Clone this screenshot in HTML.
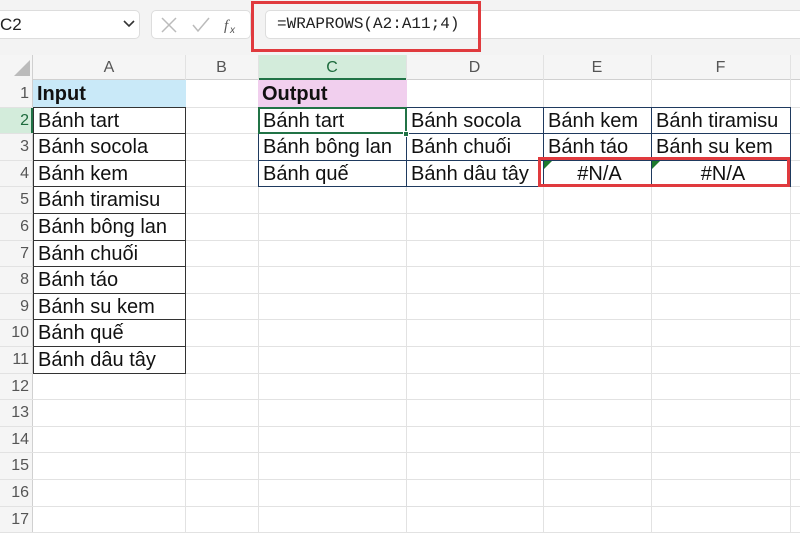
<!DOCTYPE html>
<html><head><meta charset="utf-8"><style>
*{margin:0;padding:0;box-sizing:border-box}
body{width:800px;height:533px;overflow:hidden;background:#fff;font-family:"Liberation Sans",Arial,sans-serif;position:relative}
.a{position:absolute}
.c{position:absolute;font-size:20px;color:#111;white-space:nowrap;line-height:28px;padding-left:4px;overflow:hidden}
.h{position:absolute;color:#555;font-size:16px;text-align:center}
</style></head><body>
<div class="a" style="left:0;top:0;width:800px;height:55px;background:#f3f3f3"></div>
<div class="a" style="left:-5px;top:10px;width:145px;height:29px;background:#fff;border:1px solid #ddd;border-radius:5px"></div>
<div class="a" style="left:0;top:15px;font-size:17px;color:#222">C2</div>
<svg class="a" style="left:123px;top:20px" width="12" height="8"><path d="M1 1 L6 6 L11 1" stroke="#333" stroke-width="1.6" fill="none"/></svg>
<div class="a" style="left:151px;top:10px;width:100px;height:29px;background:#fff;border:1px solid #ddd;border-radius:5px"></div>
<svg class="a" style="left:160px;top:16px" width="80" height="18"><path d="M2 2 L16 16 M16 2 L2 16" stroke="#bbb" stroke-width="1.5"/><path d="M33 9 L38 15 L49 2" stroke="#bbb" stroke-width="1.5" fill="none"/><text x="64" y="14" font-size="15" font-style="italic" font-family="Liberation Serif" fill="#555">f</text><text x="70" y="17" font-size="10" font-style="italic" fill="#555">x</text></svg>
<div class="a" style="left:265px;top:10px;width:540px;height:29px;background:#fff;border:1px solid #ddd;border-radius:5px"></div>
<div class="a" style="left:277px;top:15px;font-family:'Liberation Mono',monospace;font-size:16px;color:#222">=WRAPROWS(A2:A11;4)</div>
<div class="a" style="left:251px;top:1px;width:230px;height:51px;border:3px solid #e03a3e"></div>
<div id="g"></div>
<script>
var cols=[33,185,258,406,543,651,790,800],names=["A","B","C","D","E","F",""];
var top0=80,rh=26.6,H="";
H+='<div class="a" style="left:0;top:55px;width:800px;height:25px;background:#f5f5f5;border-bottom:1px solid #d0d0d0"></div>';
H+='<div class="a" style="left:0;top:55px;width:33px;height:478px;background:#f5f5f5;border-right:1px solid #d0d0d0"></div>';
H+='<svg class="a" style="left:14px;top:60px" width="16" height="16"><path d="M16 0 L16 16 L0 16Z" fill="#bbb"/></svg>';
H+='<div class="a" style="left:258px;top:55px;width:148px;height:25px;background:#d3ecdb;border-bottom:2px solid #217346"></div>';
for(var i=0;i<7;i++){H+='<div class="h" style="left:'+cols[i]+'px;top:59px;width:'+(cols[i+1]-cols[i])+'px;'+(i==2?'color:#1e6b3d':'')+'">'+names[i]+'</div>';
H+='<div class="a" style="left:'+cols[i+1]+'px;top:55px;width:1px;height:478px;background:#e2e2e2"></div>';}
H+='<div class="a" style="left:0;top:'+(top0+rh)+'px;width:33px;height:'+rh+'px;background:#d3ecdb;border-right:2px solid #217346"></div>';
for(var r=1;r<=17;r++){var y=top0+(r-1)*rh;
H+='<div class="h" style="left:0;top:'+(y+5)+'px;width:29px;text-align:right;'+(r==2?'color:#1e6b3d':'')+'">'+r+'</div>';
H+='<div class="a" style="left:0;top:'+(y+rh)+'px;width:800px;height:1px;background:#e2e2e2"></div>';}
function cell(c,r,t,st){var y=top0+(r-1)*rh;H+='<div class="c" style="left:'+cols[c]+'px;top:'+y+'px;width:'+(cols[c+1]-cols[c]+1)+'px;height:'+(rh+1)+'px;'+(st||'')+'">'+t+'</div>';}
var inp=["Bánh tart","Bánh socola","Bánh kem","Bánh tiramisu","Bánh bông lan","Bánh chuối","Bánh táo","Bánh su kem","Bánh quế","Bánh dâu tây"];
cell(0,1,"Input","background:#c9e9f8;font-weight:bold");
cell(2,1,"Output","background:#f1cfee;font-weight:bold");
for(var k=0;k<10;k++)cell(0,k+2,inp[k],"border:1px solid #333;line-height:26px");
for(var k=0;k<12;k++){var rr=Math.floor(k/4)+2,cc=k%4+2;
if(k<10)cell(cc,rr,inp[k],"border:1px solid #1f3a5f;line-height:26px");
else cell(cc,rr,"#N/A","border:1px solid #1f3a5f;text-align:center;line-height:26px");}
H+='<div class="a" style="left:258px;top:'+(top0+rh)+'px;width:149px;height:'+(rh+1)+'px;border:2px solid #217346"></div>';
H+='<div class="a" style="left:403px;top:'+(top0+2*rh-2)+'px;width:6px;height:6px;background:#217346;border:1px solid #fff"></div>';
var y4=top0+3*rh;
H+='<svg class="a" style="left:544px;top:'+(y4+1)+'px" width="8" height="8"><path d="M0 0H8L0 8Z" fill="#1e7a2e"/></svg>';
H+='<svg class="a" style="left:652px;top:'+(y4+1)+'px" width="8" height="8"><path d="M0 0H8L0 8Z" fill="#1e7a2e"/></svg>';
H+='<div class="a" style="left:538px;top:'+(y4-3)+'px;width:252px;height:30px;border:3px solid #e03a3e"></div>';
document.getElementById("g").innerHTML=H;
</script>
</body></html>
